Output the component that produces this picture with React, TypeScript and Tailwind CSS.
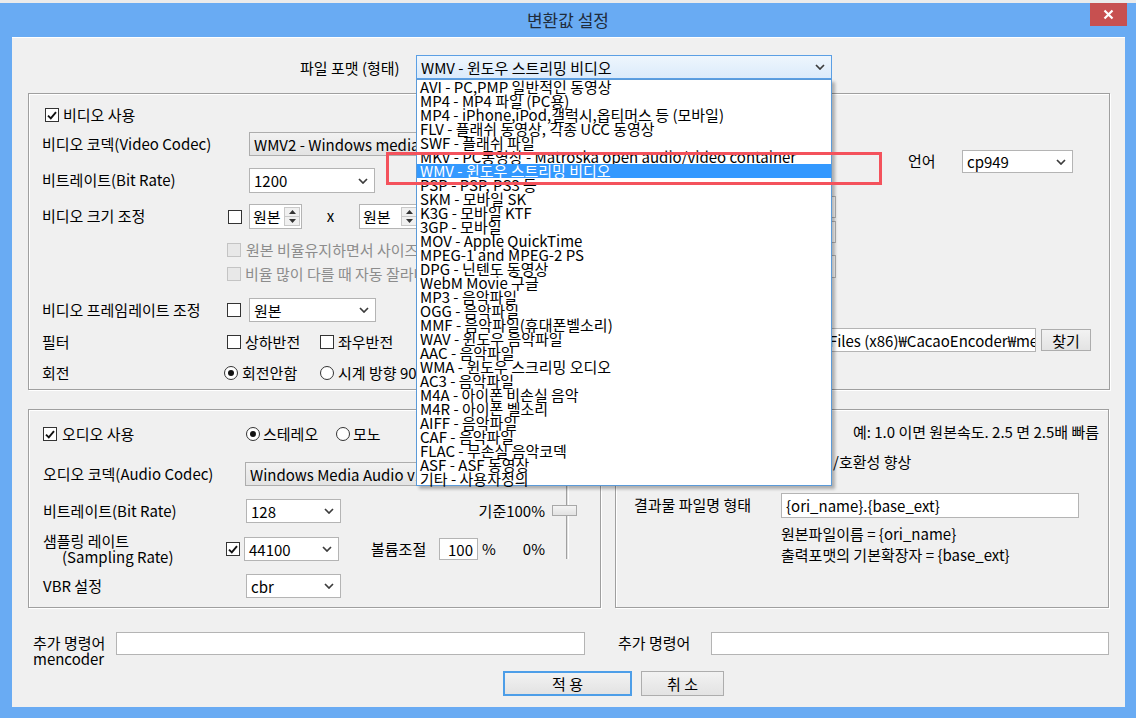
import React from "react";

const formats = [
  "AVI - PC,PMP 일반적인 동영상",
  "MP4 - MP4 파일 (PC용)",
  "MP4 - iPhone,iPod,갤럭시,옵티머스 등 (모바일)",
  "FLV - 플래쉬 동영상, 각종 UCC 동영상",
  "SWF - 플래쉬 파일",
  "MKV - PC동영상 - Matroska open audio/video container",
  "WMV - 윈도우 스트리밍 비디오",
  "PSP - PSP, PS3 등",
  "SKM - 모바일 SK",
  "K3G - 모바일 KTF",
  "3GP - 모바일",
  "MOV - Apple QuickTime",
  "MPEG-1 and MPEG-2 PS",
  "DPG - 닌텐도 동영상",
  "WebM Movie 구글",
  "MP3 - 음악파일",
  "OGG - 음악파일",
  "MMF - 음악파일(휴대폰벨소리)",
  "WAV - 윈도우 음악파일",
  "AAC - 음악파일",
  "WMA - 윈도우 스크리밍 오디오",
  "AC3 - 음악파일",
  "M4A - 아이폰 비손실 음악",
  "M4R - 아이폰 벨소리",
  "AIFF - 음악파일",
  "CAF - 음악파일",
  "FLAC - 무손실 음악코덱",
  "ASF - ASF 동영상",
  "기타 - 사용자정의",
];

function Chevron() {
  return (
    <svg width="10" height="6" viewBox="0 0 10 6" className="shrink-0">
      <path d="M1 1l4 4 4-4" fill="none" stroke="#3c3c3c" strokeWidth="1.7" />
    </svg>
  );
}

function Combo({
  value,
  className = "",
  tone = "white",
}: {
  value: string;
  className?: string;
  tone?: "white" | "gray" | "focus";
}) {
  const skin =
    tone === "gray"
      ? "border-[#adadad] bg-linear-to-b from-[#f2f2f2] to-[#e3e3e3]"
      : tone === "focus"
        ? "border-[#5b9fe4] bg-linear-to-b from-[#eef6fd] to-[#dbebfb]"
        : "border-[#b4b4b4] bg-white";
  return (
    <div className={`flex shrink-0 items-center justify-between overflow-hidden whitespace-nowrap border pl-[4px] pr-[6px] ${skin} ${className}`}>
      <span className="leading-none">{value}</span>
      <Chevron />
    </div>
  );
}

function Check({ on, off }: { on?: boolean; off?: boolean }) {
  return (
    <span
      className={`flex h-[14px] w-[14px] shrink-0 items-center justify-center border ${
        off ? "border-[#c4c4c4] bg-[#e8e8e8]" : "border-[#333333] bg-white"
      }`}
    >
      {on && (
        <svg width="10" height="9" viewBox="0 0 10 9">
          <path d="M1 4.6l2.8 2.8L9 1.2" fill="none" stroke="#111" strokeWidth="1.9" />
        </svg>
      )}
    </span>
  );
}

function Radio({ on }: { on?: boolean }) {
  return (
    <span className="flex h-[14px] w-[14px] shrink-0 items-center justify-center rounded-full border border-[#333333] bg-white">
      {on && <span className="h-[6px] w-[6px] rounded-full bg-[#111]" />}
    </span>
  );
}

function Spin({ className = "" }: { className?: string }) {
  return (
    <div className={`flex h-[25px] shrink-0 items-stretch border border-[#b4b4b4] bg-white ${className}`}>
      <span className="flex flex-1 items-center pl-[3px] leading-none">원본</span>
      <div className="my-[2px] mr-[1px] flex w-[16px] flex-col border border-[#c9c9c9] bg-[#f0f0f0]">
        <span className="flex flex-1 items-center justify-center border-b border-[#c9c9c9]">
          <svg width="7" height="4" viewBox="0 0 7 4">
            <path d="M0 4h7L3.5 0z" fill="#333" />
          </svg>
        </span>
        <span className="flex flex-1 items-center justify-center">
          <svg width="7" height="4" viewBox="0 0 7 4">
            <path d="M0 0h7L3.5 4z" fill="#333" />
          </svg>
        </span>
      </div>
    </div>
  );
}

function Field({ value = "", className = "" }: { value?: string; className?: string }) {
  return (
    <div className={`flex shrink-0 items-center overflow-hidden whitespace-nowrap border border-[#b4b4b4] bg-white px-[4px] leading-none ${className}`}>
      {value}
    </div>
  );
}

function Btn({ label, className = "", primary }: { label: string; className?: string; primary?: boolean }) {
  return (
    <div
      className={`flex shrink-0 items-center justify-center bg-linear-to-b from-[#f2f2f2] to-[#e3e3e3] leading-none ${
        primary ? "border-2 border-[#4d9ee8]" : "border border-[#adadad]"
      } ${className}`}
    >
      {label}
    </div>
  );
}

const group = "border border-[#9f9f9f] shadow-[inset_1px_1px_0_#ffffff,1px_1px_0_#ffffff]";

export default function App() {
  return (
    <div className="relative h-[718px] w-[1136px] overflow-hidden bg-[#69abf3] font-['Noto_Sans_CJK_KR','Noto_Sans',sans-serif] text-[15px] text-black">
      <div className="h-[3px] bg-[#ebebeb]" />

      {/* title bar */}
      <div className="relative flex h-[34px] items-center justify-center">
        <span className="text-[17px] text-[#1f2c3b]">변환값 설정</span>
        <div className="absolute right-[9px] top-0 flex h-[23px] w-[37px] items-center justify-center bg-[#c75050]">
          <svg width="11" height="11" viewBox="0 0 11 11">
            <path d="M1.5 1.5l8 8M9.5 1.5l-8 8" stroke="#fff" strokeWidth="2.2" />
          </svg>
        </div>
      </div>

      {/* client */}
      <div className="ml-[12px] mr-[11px] flex h-[670px] flex-col border-t border-white bg-[#f0f0f0]">
        {/* format */}
        <div className="mt-[17px] flex h-[24px] items-center">
          <span className="ml-[288px] w-[116px] leading-none">파일 포맷 (형태)</span>
          <div className="relative">
            <Combo value="WMV - 윈도우 스트리밍 비디오" tone="focus" className="h-[24px] w-[416px]" />
            <div className="absolute left-0 top-full z-10 flex h-[407px] w-[416px] flex-col border border-[#5b9ad8] bg-white shadow-[3px_3px_3px_rgba(0,0,0,0.28)]">
              {formats.map((f, i) => (
                <div
                  key={f}
                  className={`flex h-[14px] shrink-0 items-center whitespace-nowrap pl-[3px] leading-[14px] ${
                    i === 6 ? "bg-[#3399ff] text-white" : ""
                  }`}
                >
                  {f}
                </div>
              ))}
            </div>
          </div>
        </div>

        {/* video group */}
        <div className={`ml-[16px] mt-[14px] flex h-[297px] w-[1082px] ${group}`}>
          <div className="flex w-[571px] flex-col pl-[13px]">
            <div className="mt-[12px] flex h-[18px] items-center gap-[4px] pl-[3px]">
              <Check on />
              <span>비디오 사용</span>
            </div>
            <div className="mt-[8px] flex h-[24px] items-center">
              <span className="w-[207px]">비디오 코덱(Video Codec)</span>
              <Combo value="WMV2 - Windows media video 8" tone="gray" className="h-[24px] w-[340px]" />
            </div>
            <div className="mt-[12px] flex h-[25px] items-center">
              <span className="w-[207px]">비트레이트(Bit Rate)</span>
              <Combo value="1200" className="h-[25px] w-[126px]" />
            </div>
            <div className="mt-[11px] flex h-[25px] items-center">
              <span className="w-[186px]">비디오 크기 조정</span>
              <Check />
              <Spin className="ml-[7px] w-[53px]" />
              <span className="w-[57px] text-center">x</span>
              <Spin className="w-[60px]" />
            </div>
            <div className="mt-[13px] flex h-[16px] items-center">
              <span className="w-[185px]" />
              <Check off />
              <span className="ml-[5px] whitespace-nowrap text-[#8c8c8c]">원본 비율유지하면서 사이즈 조정</span>
            </div>
            <div className="mt-[8px] flex h-[16px] items-center">
              <span className="w-[185px]" />
              <Check off />
              <span className="ml-[4px] whitespace-nowrap text-[#8c8c8c]">비율 많이 다를 때 자동 잘라내기</span>
            </div>
            <div className="mt-[16px] flex h-[24px] items-center">
              <span className="w-[185px]">비디오 프레임레이트 조정</span>
              <Check />
              <Combo value="원본" className="ml-[8px] h-[24px] w-[127px]" />
            </div>
            <div className="mt-[12px] flex h-[16px] items-center">
              <span className="w-[185px]">필터</span>
              <span className="flex w-[93px] items-center gap-[4px]">
                <Check />
                상하반전
              </span>
              <span className="flex items-center gap-[4px]">
                <Check />
                좌우반전
              </span>
            </div>
            <div className="mt-[15px] flex h-[16px] items-center">
              <span className="w-[182px]">회전</span>
              <span className="flex w-[96px] items-center gap-[4px]">
                <Radio on />
                회전안함
              </span>
              <span className="flex items-center gap-[4px] whitespace-nowrap">
                <Radio />
                시계 방향 90도
              </span>
            </div>
          </div>

          <div className="flex flex-1 flex-col">
            <div className="mt-[56px] flex h-[23px] items-center">
              <span className="ml-[308px] w-[54px]">언어</span>
              <Combo value="cp949" className="h-[23px] w-[111px]" />
            </div>
            <Field className="ml-[100px] mt-[23px] h-[22px] w-[136px]" />
            <Field className="ml-[100px] mt-[3px] h-[22px] w-[136px]" />
            <Field className="ml-[100px] mt-[12px] h-[23px] w-[136px]" />
            <div className="mt-[50px] flex h-[24px] items-center">
              <Field value="C:₩Program Files (x86)₩CacaoEncoder₩mencoder.exe" className="ml-[138px] h-[24px] w-[298px]" />
              <Btn label="찾기" className="ml-[5px] h-[22px] w-[50px]" />
            </div>
          </div>
        </div>

        {/* audio + output */}
        <div className="ml-[16px] mt-[19px] flex gap-[14px]">
          <div className={`flex h-[199px] w-[573px] ${group}`}>
            <div className="flex w-[522px] flex-col pl-[14px] pr-[6px]">
              <div className="mt-[15px] flex h-[18px] items-center">
                <span className="flex w-[203px] items-center gap-[5px]">
                  <Check on />
                  오디오 사용
                </span>
                <span className="flex w-[90px] items-center gap-[3px]">
                  <Radio on />
                  스테레오
                </span>
                <span className="flex items-center gap-[3px]">
                  <Radio />
                  모노
                </span>
              </div>
              <div className="mt-[19px] flex h-[24px] items-center">
                <span className="w-[203px]">오디오 코덱(Audio Codec)</span>
                <Combo value="Windows Media Audio v1 (wmav1)" tone="gray" className="h-[24px] w-[300px]" />
              </div>
              <div className="mt-[13px] flex h-[24px] items-center">
                <span className="w-[203px]">비트레이트(Bit Rate)</span>
                <Combo value="128" className="h-[24px] w-[95px]" />
                <span className="ml-auto">기준100%</span>
              </div>
              <div className="mt-[14px] flex h-[24px] items-center">
                <span className="flex w-[183px] flex-col leading-[16px]">
                  <span>샘플링 레이트</span>
                  <span className="pl-[19px]">(Sampling Rate)</span>
                </span>
                <Check on />
                <Combo value="44100" className="ml-[4px] h-[24px] w-[95px]" />
                <span className="ml-[32px] w-[68px]">볼륨조절</span>
                <Field value="100" className="h-[22px] w-[39px] justify-end" />
                <span className="ml-[4px]">%</span>
                <span className="ml-auto">0%</span>
              </div>
              <div className="mt-[13px] flex h-[24px] items-center">
                <span className="w-[203px]">VBR 설정</span>
                <Combo value="cbr" className="h-[24px] w-[95px]" />
              </div>
            </div>
            <div className="relative ml-[15px] mt-[73px] h-[76px] w-[3px] border-l border-r border-l-[#a0a0a0] border-r-white bg-[#e3e3e3]">
              <span className="absolute left-[-15px] top-[22px] h-[11px] w-[25px] border border-[#a8a8a8] bg-linear-to-b from-[#f4f4f4] to-[#e2e2e2]" />
            </div>
          </div>

          <div className={`flex h-[199px] w-[494px] flex-col ${group}`}>
            <div className="mt-[14px] flex h-[16px] items-center justify-end pr-[9px]">
              <span>예: 1.0 이면 원본속도. 2.5 면 2.5배 빠름</span>
            </div>
            <div className="mt-[14px] flex h-[16px] items-center pl-[18px]">
              <Check />
              <span className="ml-[4px] w-[181px] whitespace-nowrap">스마트폰 재생 최적화</span>
              <span>/호환성 향상</span>
            </div>
            <div className="mt-[23px] flex h-[25px] items-center pl-[18px]">
              <span className="w-[147px]">결과물 파일명 형태</span>
              <Field value="{ori_name}.{base_ext}" className="h-[25px] w-[298px]" />
            </div>
            <div className="mt-[8px] flex h-[16px] items-center pl-[165px]">원본파일이름 = {"{ori_name}"}</div>
            <div className="mt-[5px] flex h-[16px] items-center pl-[165px]">출력포맷의 기본확장자 = {"{base_ext}"}</div>
          </div>
        </div>

        {/* extra commands */}
        <div className="mt-[24px] flex h-[23px] items-start">
          <span className="ml-[21px] mt-[3px] flex w-[83px] flex-col leading-[16px]">
            <span>추가 명령어</span>
            <span>mencoder</span>
          </span>
          <Field className="h-[23px] w-[469px]" />
          <span className="ml-[33px] mt-[3px] w-[93px] leading-[16px]">추가 명령어</span>
          <Field className="h-[23px] w-[398px]" />
        </div>

        {/* buttons */}
        <div className="mt-[16px] flex h-[25px]">
          <Btn label="적 용" primary className="ml-[491px] h-[25px] w-[129px]" />
          <Btn label="취 소" className="ml-[9px] h-[25px] w-[83px]" />
        </div>
      </div>

      {/* annotation */}
      <div className="absolute left-[386px] top-[152px] z-20 h-[33px] w-[496px] border-[3px] border-[#f4525c]" />
    </div>
  );
}
